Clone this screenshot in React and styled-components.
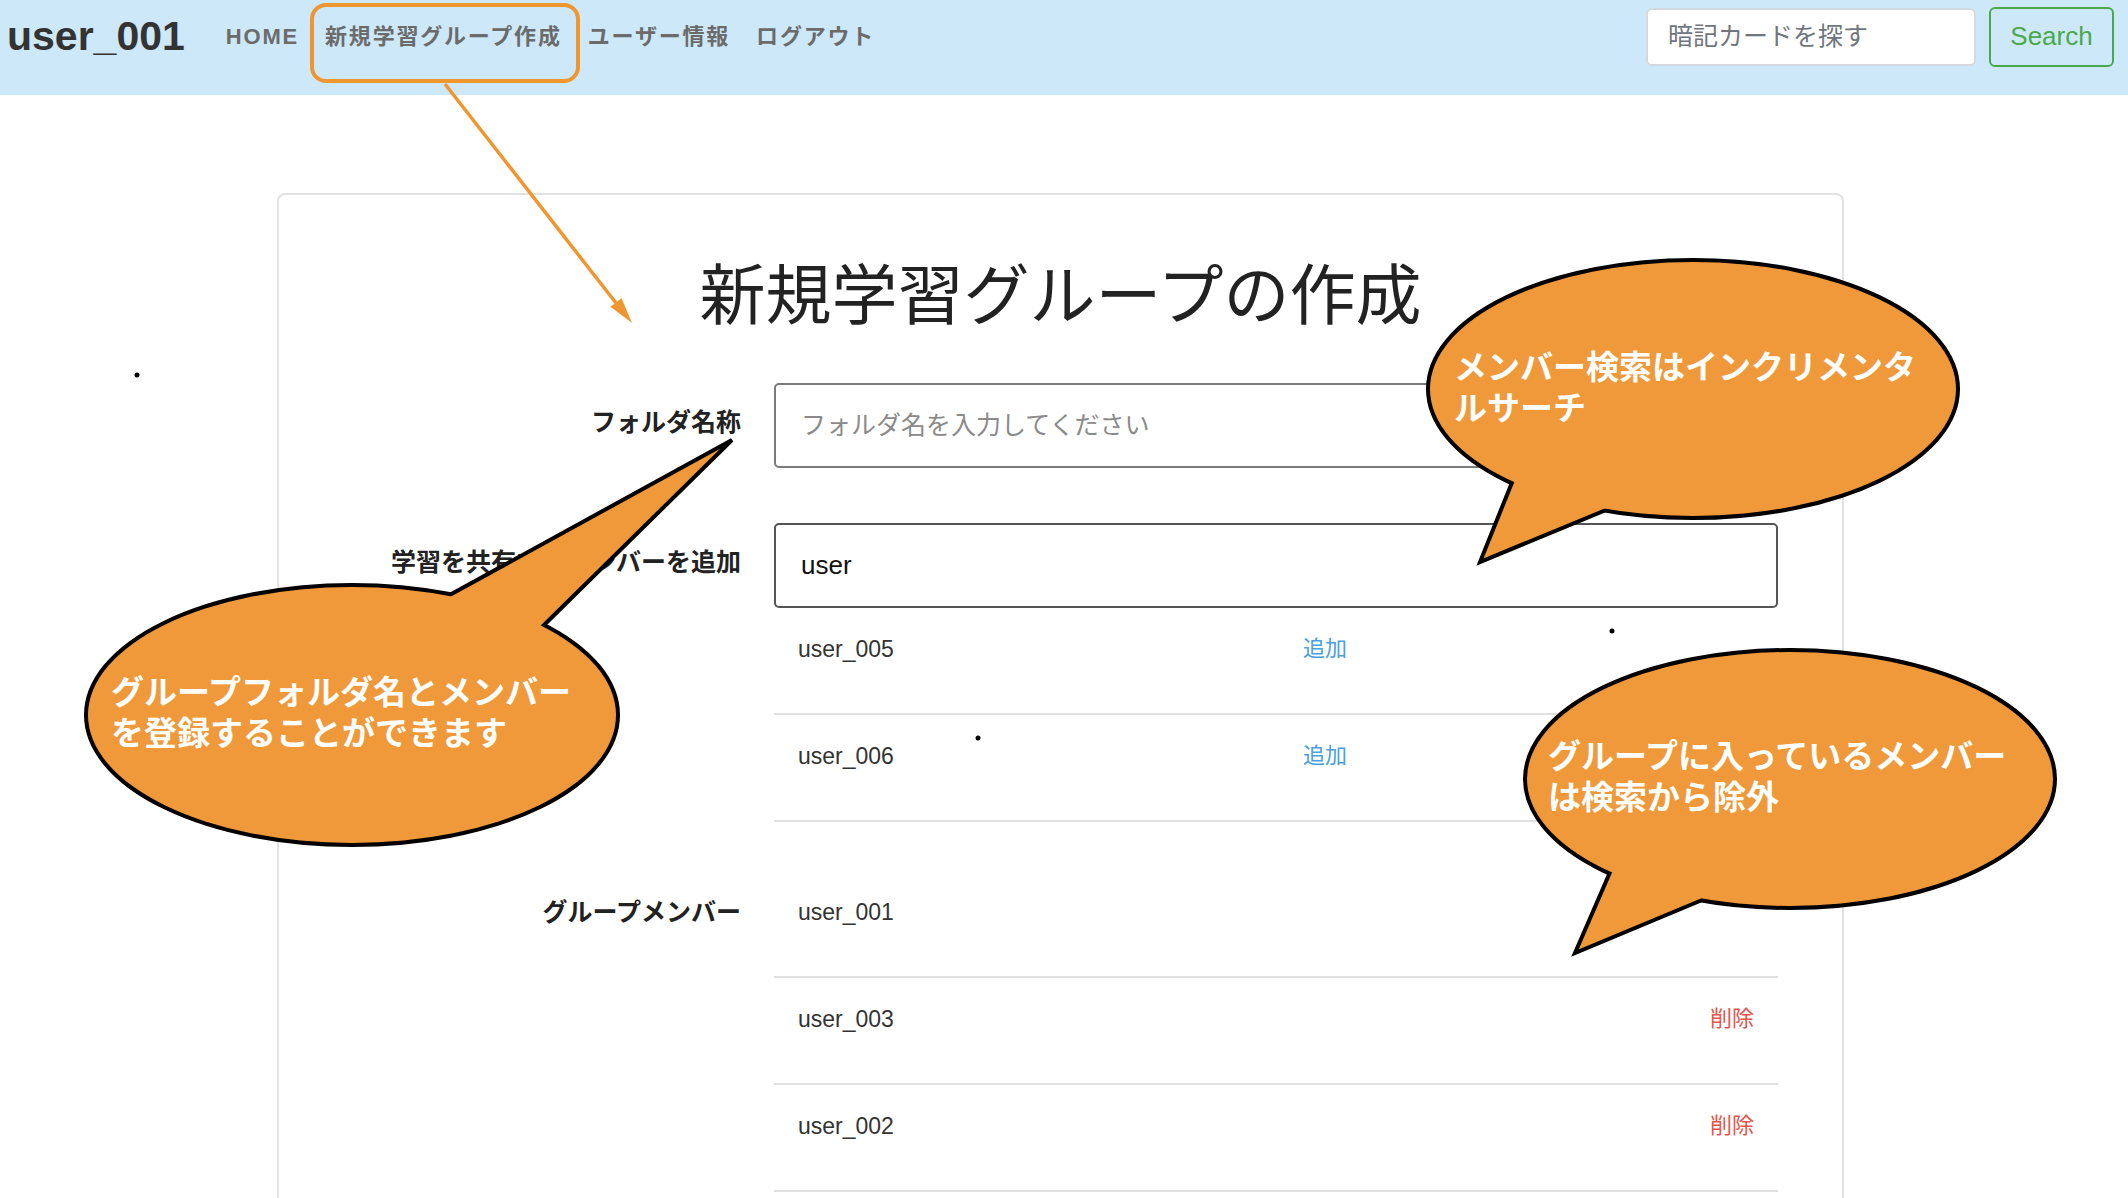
import React from "react";
import styled, { createGlobalStyle } from "styled-components";

const GlobalStyle = createGlobalStyle`
  html, body {
    margin: 0;
    padding: 0;
    overflow: hidden;
    background: #fff;
  }
  body {
    font-family: "Helvetica Neue", "Liberation Sans", "Noto Sans CJK JP", sans-serif;
    color: #222;
  }
  * { box-sizing: border-box; }
`;

const Page = styled.div`
  position: relative;
  width: 2128px;
  min-height: 1198px;
`;

const Navbar = styled.nav`
  display: flex;
  align-items: center;
  height: 95px;
  padding: 0 14px 22px 7px;
  background: #cde8f9;
`;

const Brand = styled.a`
  font-size: 41px;
  font-weight: 700;
  line-height: 1;
  color: #333;
`;

const NavList = styled.div`
  display: flex;
  align-items: center;
  margin-left: 28px;
  flex: 1;
`;

const NavLink = styled.a`
  position: relative;
  padding: 0 13px;
  font-size: 22px;
  font-weight: 700;
  line-height: 30px;
  letter-spacing: 1.8px;
  color: #6b6b6b;

  ${(p) =>
    p.$marked &&
    `
    &::after {
      content: "";
      position: absolute;
      left: -2px;
      right: -5px;
      top: -19px;
      bottom: -31px;
      border: 4px solid #f0962f;
      border-radius: 16px;
    }
  `}
`;

const SearchForm = styled.form`
  display: flex;
  align-items: center;
  gap: 13px;
`;

const SearchInput = styled.input`
  width: 330px;
  height: 58px;
  padding: 0 20px;
  border: 2px solid #d4d9de;
  border-radius: 6px;
  background: #fff;
  font-family: inherit;
  font-size: 25px;
  &::placeholder { color: #6f767d; }
`;

const SearchButton = styled.button`
  width: 125px;
  height: 60px;
  border: 2px solid #4aa94c;
  border-radius: 6px;
  background: transparent;
  color: #4aa94c;
  font-family: inherit;
  font-size: 26px;
`;

const Card = styled.section`
  width: 1567px;
  margin: 98px 0 0 277px;
  padding: 62px 65px 60px;
  border: 2px solid #e2e2e2;
  border-radius: 8px;
`;

const Title = styled.h1`
  margin: 0 0 48px;
  text-align: center;
  font-size: 66px;
  font-weight: 400;
  line-height: 78px;
  color: #222;
`;

const FormRow = styled.div`
  display: grid;
  grid-template-columns: 397px 1004px;
  column-gap: 33px;
  align-items: center;
  margin-bottom: ${(p) => p.$gap || 0}px;
`;

const Label = styled.label`
  align-self: ${(p) => (p.$top ? "start" : "center")};
  padding: ${(p) => (p.$top ? "26px 0 0" : "0 0 8px")};
  text-align: right;
  font-size: 25px;
  font-weight: 700;
  line-height: 30px;
  color: #222;
`;

const TextInput = styled.input`
  height: 85px;
  padding: 0 25px;
  border: 2px solid ${(p) => (p.$active ? "#555" : "#7a7a7a")};
  border-radius: 5px;
  font-family: inherit;
  font-size: 26px;
  color: #111;
  &::placeholder { color: #8a8a8a; font-size: 25px; }
`;

const List = styled.div`
  display: flex;
  flex-direction: column;
`;

const ListRow = styled.div`
  display: grid;
  grid-template-columns: ${(p) => (p.$split ? "1fr 1fr" : "1fr auto")};
  column-gap: 54px;
  padding: 26px 24px 49px;
  border-bottom: 2px solid #e0e0e0;
  font-size: 23px;
  line-height: 30px;
  color: #333;
`;

const ActionLink = styled.button`
  justify-self: ${(p) => (p.$danger ? "end" : "start")};
  padding: 0;
  border: none;
  background: none;
  font-family: inherit;
  font-size: 22px;
  line-height: 30px;
  color: ${(p) => (p.$danger ? "#e5534b" : "#4a9fe0")};
`;

const Overlay = styled.div`
  position: absolute;
  left: 0;
  top: 0;
  width: 2128px;
  height: 1198px;
  pointer-events: none;
`;

const BubbleText = styled.div`
  position: absolute;
  left: ${(p) => p.$x}px;
  top: ${(p) => p.$y}px;
  width: 470px;
  font-size: 33px;
  font-weight: 700;
  line-height: 41px;
  color: #fff;
`;

const ORANGE = "#f0993a";

const bubbles = [
  {
    cx: 1693, cy: 389, rx: 263, ry: 127,
    tail: [[1513, 480], [1480, 562], [1611, 508]],
    text: "メンバー検索はインクリメンタルサーチ",
    tx: 1454, ty: 347,
  },
  {
    cx: 352, cy: 715, rx: 264, ry: 128,
    tail: [[446, 597], [732, 440], [542, 627]],
    text: "グループフォルダ名とメンバーを登録することができます",
    tx: 111, ty: 672,
  },
  {
    cx: 1790, cy: 779, rx: 263, ry: 127,
    tail: [[1611, 870], [1575, 953], [1707, 898]],
    text: "グループに入っているメンバーは検索から除外",
    tx: 1548, ty: 736,
  },
];

const candidates = ["user_005", "user_006"];
const members = [
  { name: "user_001", self: true },
  { name: "user_003" },
  { name: "user_002" },
];

function Annotations() {
  return (
    <Overlay>
      <svg width="2128" height="1198">
        <line x1="445" y1="84" x2="616" y2="303" stroke="#f0962f" strokeWidth="3.5" />
        <polygon points="632,323 610.5,306.8 621.5,298.2" fill="#f0962f" />
        {bubbles.map((b, i) => (
          <g key={i}>
            <ellipse cx={b.cx} cy={b.cy} rx={b.rx} ry={b.ry} fill={ORANGE} stroke="#000" strokeWidth="8" />
            <path
              d={`M${b.tail[0].join(",")} L${b.tail[1].join(",")} L${b.tail[2].join(",")}`}
              fill={ORANGE}
              stroke="#000"
              strokeWidth="4"
            />
            <ellipse cx={b.cx} cy={b.cy} rx={b.rx} ry={b.ry} fill={ORANGE} />
          </g>
        ))}
        <circle cx="137" cy="375" r="2.5" fill="#000" />
        <circle cx="1612" cy="631" r="2.5" fill="#000" />
        <circle cx="978" cy="738" r="2.5" fill="#000" />
      </svg>
      {bubbles.map((b, i) => (
        <BubbleText key={i} $x={b.tx} $y={b.ty}>{b.text}</BubbleText>
      ))}
    </Overlay>
  );
}

export default function App() {
  return (
    <Page>
      <GlobalStyle />
      <Navbar>
        <Brand>user_001</Brand>
        <NavList>
          <NavLink>HOME</NavLink>
          <NavLink $marked>新規学習グループ作成</NavLink>
          <NavLink>ユーザー情報</NavLink>
          <NavLink>ログアウト</NavLink>
        </NavList>
        <SearchForm onSubmit={(e) => e.preventDefault()}>
          <SearchInput placeholder="暗記カードを探す" />
          <SearchButton type="submit">Search</SearchButton>
        </SearchForm>
      </Navbar>

      <Card>
        <Title>新規学習グループの作成</Title>

        <FormRow $gap={55}>
          <Label>フォルダ名称</Label>
          <TextInput placeholder="フォルダ名を入力してください" />
        </FormRow>

        <FormRow>
          <Label>学習を共有するメンバーを追加</Label>
          <TextInput $active defaultValue="user" />
        </FormRow>

        <FormRow $gap={49}>
          <div />
          <List>
            {candidates.map((name) => (
              <ListRow key={name} $split>
                <span>{name}</span>
                <ActionLink>追加</ActionLink>
              </ListRow>
            ))}
          </List>
        </FormRow>

        <FormRow>
          <Label $top>グループメンバー</Label>
          <List>
            {members.map((m) => (
              <ListRow key={m.name}>
                <span>{m.name}</span>
                {!m.self && <ActionLink $danger>削除</ActionLink>}
              </ListRow>
            ))}
          </List>
        </FormRow>
      </Card>

      <Annotations />
    </Page>
  );
}
